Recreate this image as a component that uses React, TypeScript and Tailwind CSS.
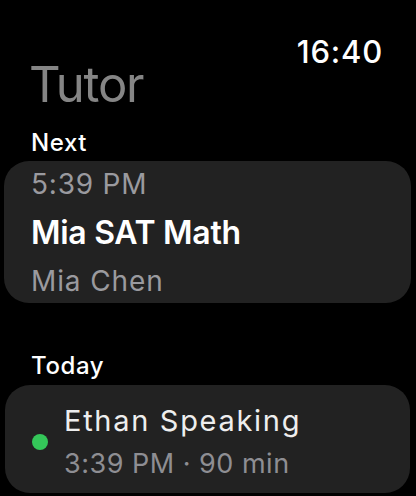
export default function App() {
  return (
    <div
      className="w-[416px] h-[496px] overflow-hidden bg-black text-white"
      style={{ fontFamily: 'Inter, "Noto Sans", sans-serif' }}
    >
      {/* Status time */}
      <div className="flex justify-end pr-[33px] pt-[37px]">
        <span className="text-[31px] leading-[30px] font-medium tracking-[0.8px]">16:40</span>
      </div>

      {/* Title */}
      <h1 className="mt-[-2px] pl-[29px] text-[49px] leading-[40px] tracking-[-1.2px] text-[#858585]">
        Tutor
      </h1>

      {/* Next */}
      <h2 className="mt-[24px] pl-[31px] text-[24px] leading-[28px] font-medium tracking-[0.6px]">Next</h2>
      <div className="mt-[4px] ml-[4px] mr-[5px] rounded-[25px] bg-[#222222] pl-[27px] pt-[6px] pb-[5px]">
        <p className="text-[28px] leading-[34px] tracking-[0.8px] text-[#9a9a9f]">5:39 PM</p>
        <p className="mt-[13px] text-[32px] leading-[38px] font-semibold tracking-[-0.3px]">Mia SAT Math</p>
        <p className="mt-[12px] text-[28px] leading-[34px] tracking-[0.9px] text-[#9a9a9f]">Mia Chen</p>
      </div>

      {/* Today */}
      <h2 className="mt-[49px] pl-[31px] text-[24px] leading-[28px] font-medium tracking-[0.6px]">Today</h2>
      <div className="mt-[5px] ml-[5px] mr-[6px] flex items-center gap-[16px] rounded-[25px] bg-[#222222] pl-[27px] pt-[19px] pb-[13px]">
        <span className="h-[16px] w-[16px] shrink-0 rounded-full bg-[#34c759]" />
        <div>
          <p className="text-[29px] leading-[34px] tracking-[1.7px] text-[#eeeeee]">Ethan Speaking</p>
          <p className="mt-[10px] text-[27px] leading-[32px] tracking-[0.5px] text-[#8e8e93]">3:39 PM · 90 min</p>
        </div>
      </div>
    </div>
  );
}
